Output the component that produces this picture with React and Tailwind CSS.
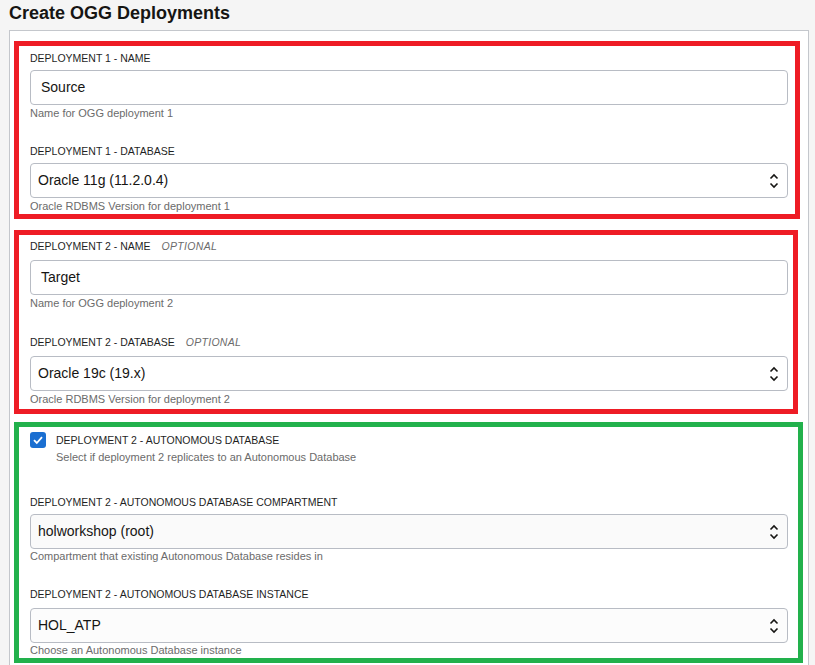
import React from 'react';

const Chevrons = () => (
    <svg width="10" height="16" viewBox="0 0 10 16" className="absolute right-[8px] top-1/2 -translate-y-1/2">
        <path d="M1.5 5.5 L5 2 L8.5 5.5" fill="none" stroke="#161513" strokeWidth="1.6" />
        <path d="M1.5 10.5 L5 14 L8.5 10.5" fill="none" stroke="#161513" strokeWidth="1.6" />
    </svg>
);

const Label = ({ text, optional }) => (
    <div className="flex items-center text-[10.5px] leading-[14px] text-[#1f1f1f]">
        <span>{text}</span>
        {optional && <span className="ml-[11px] italic tracking-[0.3px] text-[#6b6b6b]">OPTIONAL</span>}
    </div>
);

const Help = ({ text, top = 'mt-[1px]' }) => (
    <div className={`text-[11px] leading-[14px] text-[#6b6b6b] ${top}`}>{text}</div>
);

const TextBox = ({ value }) => (
    <div className="w-[758px] h-[35px] border border-[#b8bcc4] rounded-[4px] bg-white flex items-center pl-[10px] text-[14px] text-[#161513]">
        {value}
    </div>
);

const SelectBox = ({ value, bg = 'bg-white' }) => (
    <div className={`relative w-[758px] h-[35px] border border-[#b8bcc4] rounded-[4px] flex items-center pl-[7px] text-[14px] text-[#161513] ${bg}`}>
        {value}
        <Chevrons />
    </div>
);

export default function App() {
    return (
        <div className="min-h-[665px] bg-[#f5f5f5] font-['Liberation_Sans',Arial,sans-serif] overflow-hidden">
            <h1 className="pl-[9px] pt-[2px] h-[30px] text-[18px] leading-[22px] font-bold text-[#161513]">
                Create OGG Deployments
            </h1>

            <div className="ml-[9px] w-[800px] h-[640px] border border-[#c4c7cc] bg-white pt-[10px] pl-[4px]">
                {/* deployment 1 */}
                <div className="w-[786px] border-[5px] border-[#ee1c25] pl-[11px] pt-[5px] pb-[1px]">
                    <Label text="DEPLOYMENT 1 - NAME" />
                    <div className="mt-[5px]"><TextBox value="Source" /></div>
                    <Help text="Name for OGG deployment 1" />
                    <div className="mt-[24px]"><Label text="DEPLOYMENT 1 - DATABASE" /></div>
                    <div className="mt-[5px]"><SelectBox value="Oracle 11g (11.2.0.4)" /></div>
                    <Help text="Oracle RDBMS Version for deployment 1" />
                </div>

                {/* deployment 2 */}
                <div className="mt-[11px] w-[784px] border-[5px] border-[#ee1c25] pl-[11px] pt-[4px] pb-[3px]">
                    <Label text="DEPLOYMENT 2 - NAME" optional />
                    <div className="mt-[7px]"><TextBox value="Target" /></div>
                    <Help text="Name for OGG deployment 2" />
                    <div className="mt-[25px]"><Label text="DEPLOYMENT 2 - DATABASE" optional /></div>
                    <div className="mt-[7px]"><SelectBox value="Oracle 19c (19.x)" /></div>
                    <Help text="Oracle RDBMS Version for deployment 2" />
                </div>

                {/* autonomous */}
                <div className="mt-[8px] w-[789px] border-[5px] border-[#22b14c] pl-[11px] pt-[5px] pb-[1px]">
                    <div className="flex items-start gap-[10px]">
                        <div className="w-[16px] h-[16px] rounded-[3px] bg-[#1b6fd1] flex items-center justify-center">
                            <svg width="12" height="12" viewBox="0 0 12 12">
                                <path d="M2 6.2 L4.8 9 L10 3.2" fill="none" stroke="white" strokeWidth="1.8" />
                            </svg>
                        </div>
                        <div className="pt-[1px]">
                            <div className="text-[10.5px] leading-[14px] text-[#1f1f1f]">DEPLOYMENT 2 - AUTONOMOUS DATABASE</div>
                            <div className="text-[11px] leading-[14px] text-[#6b6b6b] mt-[3px]">Select if deployment 2 replicates to an Autonomous Database</div>
                        </div>
                    </div>
                    <div className="mt-[31px]"><Label text="DEPLOYMENT 2 - AUTONOMOUS DATABASE COMPARTMENT" /></div>
                    <div className="mt-[5px]"><SelectBox value="holworkshop (root)" bg="bg-[#fafafa]" /></div>
                    <Help text="Compartment that existing Autonomous Database resides in" top="mt-0" />
                    <div className="mt-[24px]"><Label text="DEPLOYMENT 2 - AUTONOMOUS DATABASE INSTANCE" /></div>
                    <div className="mt-[7px]"><SelectBox value="HOL_ATP" bg="bg-[#fcfcfc]" /></div>
                    <Help text="Choose an Autonomous Database instance" top="mt-0" />
                </div>
            </div>
        </div>
    );
}
